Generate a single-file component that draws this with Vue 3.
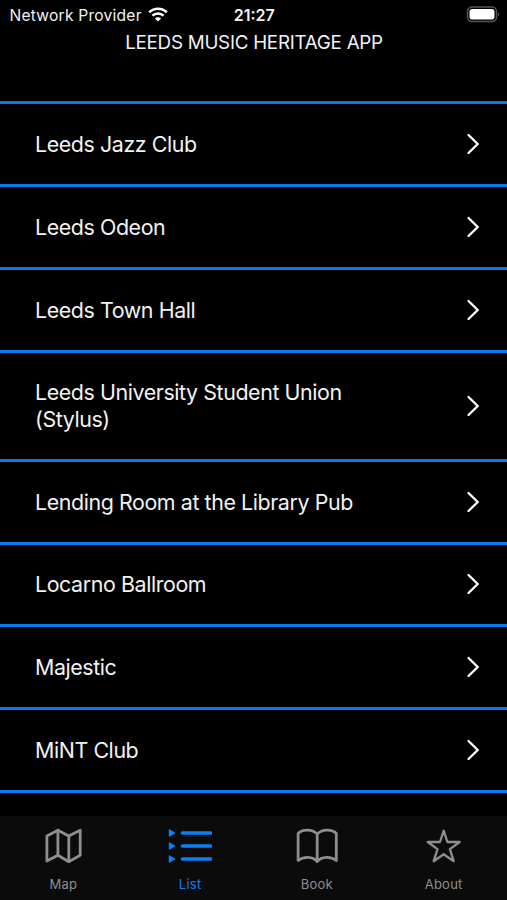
<script setup>
const venues = [
  'Leeds Jazz Club',
  'Leeds Odeon',
  'Leeds Town Hall',
  'Leeds University Student Union (Stylus)',
  'Lending Room at the Library Pub',
  'Locarno Ballroom',
  'Majestic',
  'MiNT Club',
]
const tabs = ['Map', 'List', 'Book', 'About']
const active = 'List'
</script>

<template>
  <div class="screen">
    <header class="status">
      <div class="carrier">
        <span class="provider">Network Provider</span>
        <svg class="wifi" width="20" height="15" viewBox="0 0 20 15">
          <path d="M1.2 5.2C6.2.5 13.8.5 18.8 5.2" />
          <path d="M4.4 8.6C7.6 5.7 12.4 5.7 15.6 8.6" />
          <path class="dot" d="M10 14.6 6.9 11.4C8.7 9.8 11.3 9.8 13.1 11.4Z" />
        </svg>
      </div>
      <span class="time">21:27</span>
      <svg class="battery" width="33" height="17" viewBox="0 0 33 17">
        <rect class="shell" x="1.5" y="1" width="29" height="14.6" rx="4.5" />
        <rect class="charge" x="3.5" y="3" width="25" height="10.6" rx="2.8" />
        <path class="tip" d="M31.8 6.2C33.4 7 33.4 9.6 31.8 10.4Z" />
      </svg>
    </header>
    <h1 class="title">LEEDS MUSIC HERITAGE APP</h1>

    <ul class="list">
      <li v-for="venue in venues" :key="venue" class="row">
        <span class="name">{{ venue }}</span>
        <svg class="chevron" width="14" height="22" viewBox="0 0 14 22">
          <path d="M2.5 2 11.7 11 2.5 20" />
        </svg>
      </li>
    </ul>

    <nav class="tabs">
      <a v-for="tab in tabs" :key="tab" class="tab" :class="{ active: tab === active }">
        <svg v-if="tab === 'Map'" class="icon" width="44" height="36" viewBox="0 0 44 36">
          <path d="M5.9 7.9 16.9 2.2 27.8 7.9 39.2 2.2V27.3L27.8 33.7 16.9 27.3 5.9 33Z" />
          <path d="M16.9 2.2V27.3M27.8 7.9V33.7" />
        </svg>
        <svg v-else-if="tab === 'List'" class="icon" width="44" height="36" viewBox="0 0 44 36">
          <path class="bars" d="M14.5 5H42.5M14.5 18H42.5M14.5 31H42.5" />
          <path class="arrows" d="M1.5 2 6.5 5 1.5 8ZM1.5 15 6.5 18 1.5 21ZM1.5 28 6.5 31 1.5 34Z" />
        </svg>
        <svg v-else-if="tab === 'Book'" class="icon" width="44" height="36" viewBox="0 0 44 36">
          <path d="M22.2 6.2C17.7.9 7.5.8 3.1 5.4V32.5C8.5 28 17.7 28.2 22.2 33.5C26.7 28.2 35.9 28 41.3 32.5V5.4C36.9.8 26.7.9 22.2 6.2ZV33.5" />
        </svg>
        <svg v-else class="icon" width="44" height="36" viewBox="0 0 44 36">
          <path class="star" d="M21.7 2.7 25.4 14H37.7L27.9 21.1 31.7 33.2 21.7 26.2 11.7 33.2 15.5 21.1 5.7 14H18Z" />
        </svg>
        <span class="label">{{ tab }}</span>
      </a>
    </nav>
  </div>
</template>

<style>
body {
  background: #000;
}
</style>

<style scoped>
.screen {
  display: flex;
  flex-direction: column;
  box-sizing: border-box;
  width: 507px;
  height: 900px;
  overflow: hidden;
  background: #000;
  color: #f2f2f2;
  font-family: Inter, "Liberation Sans", sans-serif;
}
.status {
  display: grid;
  grid-template-columns: 1fr auto 1fr;
  align-items: center;
  height: 29px;
  padding: 0 8px 0 9.5px;
  box-sizing: border-box;
  flex: none;
}
.carrier {
  display: flex;
  align-items: center;
  gap: 6px;
}
.provider {
  padding-top: 1px;
  font-size: 15.6px;
  letter-spacing: 0.22px;
  white-space: nowrap;
}
.time {
  font-size: 16px;
  font-weight: 600;
}
.battery {
  justify-self: end;
}
.wifi path {
  fill: none;
  stroke: #fff;
  stroke-width: 2.6;
}
.wifi .dot {
  fill: #fff;
  stroke: none;
}
.shell {
  fill: none;
  stroke: #555;
  stroke-width: 1.5;
}
.charge {
  fill: #fff;
}
.tip {
  fill: #555;
}
.title {
  flex: none;
  height: 26px;
  margin: 1px 0 45px;
  padding-left: 1px;
  font-size: 18.8px;
  line-height: 26px;
  font-weight: 400;
  letter-spacing: -0.26px;
  text-align: center;
}
.list {
  flex: 1;
  min-height: 0;
  margin: 0;
  padding: 0;
  list-style: none;
  border-top: 3px solid #087aee;
}
.row {
  display: flex;
  align-items: center;
  justify-content: space-between;
  box-sizing: border-box;
  padding: 26.8px 27.5px 26.8px 35px;
  border-bottom: 3px solid #087aee;
}
.name {
  max-width: 350px;
  font-size: 21.4px;
  line-height: 26.26px;
  letter-spacing: -0.41px;
}
.chevron {
  flex: none;
}
.chevron path {
  fill: none;
  stroke: #fff;
  stroke-width: 2.3;
  stroke-linecap: round;
}
.tabs {
  display: grid;
  grid-template-columns: repeat(4, 1fr);
  flex: none;
  height: 84px;
  background: #0b0b0b;
}
.tab {
  display: flex;
  flex-direction: column;
  align-items: center;
  padding-top: 12px;
  color: #8e8e8e;
}
.active {
  color: #0b7ff5;
}
.icon path {
  fill: none;
  stroke: currentColor;
  stroke-width: 2.8;
  stroke-linejoin: round;
  stroke-linecap: round;
}
.icon .star {
  stroke-width: 2.3;
}
.icon .bars {
  stroke-width: 3.6;
}
.icon .arrows {
  fill: currentColor;
  stroke-width: 1.4;
}
.label {
  margin-top: 11px;
  font-size: 13px;
  line-height: 18px;
  letter-spacing: 0.25px;
}
</style>
